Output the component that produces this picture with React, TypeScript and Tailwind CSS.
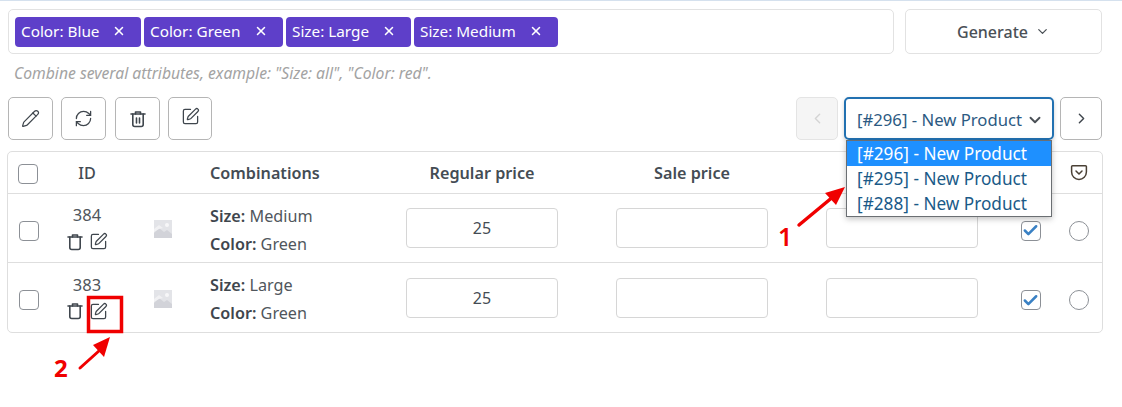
import { ChevronDown, ChevronLeft, ChevronRight, X, Pencil, RefreshCw, Check, SquarePen } from "lucide-react";

function Trash({ bars, size = 18 }: { bars?: boolean; size?: number }) {
  return (
    <svg width={size} height={size} viewBox="0 0 18 18" fill="none" stroke="#3f464d" strokeWidth="1.6" strokeLinecap="round" strokeLinejoin="round">
      <path d="M2 4h14" />
      <path d="M6.500 4V2h5v2" />
      <path d="M3.800 4v10.500A2 2 0 0 0 5.800 16.500h6.400a2 2 0 0 0 2-2V4" />
      {bars && <path d="M7.500 8v5M10.500 8v5" />}
    </svg>
  );
}

function ImgPh() {
  return (
    <svg width="18" height="18" viewBox="0 0 18 18">
      <rect width="18" height="18" fill="#e3e4e8" />
      <path d="M0 13l5-5 5 4 3-2 5 4v4H0z" fill="#d2d3d9" />
      <path d="M0 9l5-4 4 3-4 1-5 3z" fill="#f1f1f3" />
      <circle cx="13" cy="5" r="2" fill="#f7f7f8" />
    </svg>
  );
}

function Tag({ label, w }: { label: string; w: string }) {
  return (
    <div className={`flex h-[30px] items-center justify-between rounded-[4px] bg-[#5e3fc9] pl-[6px] text-[15.300px] text-white ${w}`}>
      <span>{label}</span>
      <span className="mr-[15px] -mt-[2px] flex w-[14px] justify-center"><X size={14} strokeWidth={2.6} /></span>
    </div>
  );
}

function ToolBtn({ children, w }: { children: React.ReactNode; w: string }) {
  return (
    <button className={`flex h-[43px] items-center justify-center rounded-[5px] border border-[#b5b5b5] bg-white text-[#3f464d] ${w}`}>
      {children}
    </button>
  );
}

const cols = "grid grid-cols-[42px_74px_86px_196px_210px_210px_152px_77px_47px] items-center";

function Box({ checked }: { checked?: boolean }) {
  return (
    <span className="flex h-[20px] w-[20px] items-center justify-center rounded-[4px] border border-[#8c9096] bg-white">
      {checked && <Check size={17} strokeWidth={3.6} className="text-[#3a81c4]" />}
    </span>
  );
}

function Row({ id, k, last }: { id: string; k: string; last?: boolean }) {
  return (
    <div className={`${cols} h-[69px] ${last ? "" : "border-b border-[#dedede]"}`}>
      <div className="mt-[5px] flex justify-start pl-[11px]"><Box /></div>
      <div className="flex flex-col items-center gap-[7px]">
        <span className="text-[16.500px] leading-[20px] text-[#50565c]">{id}</span>
        <div className="flex items-center gap-[5px]">
          <Trash />
          <SquarePen size={19} strokeWidth={1.6} className="text-[#3f464d]" />
        </div>
      </div>
      <div className="mt-[2px] flex justify-center pr-[9px]"><ImgPh /></div>
      <div className="mt-[3px] flex flex-col text-[16.200px] leading-[28px] text-[#50565c]">
        <span><b className="font-semibold text-[#3f464d]">Size:</b> {k}</span>
        <span><b className="font-semibold text-[#3f464d]">Color:</b> Green</span>
      </div>
      <div><div className="flex h-[40px] w-[152px] items-center justify-center rounded-[4px] border border-[#d6d6d6] text-[16px] text-[#444c54]">25</div></div>
      <div><div className="h-[40px] w-[152px] rounded-[4px] border border-[#d6d6d6]" /></div>
      <div><div className="h-[40px] w-[152px] rounded-[4px] border border-[#d6d6d6]" /></div>
      <div className="mt-[5px] flex justify-center pl-[28px]"><Box checked /></div>
      <div className="mt-[5px] flex justify-center"><span className="h-[20px] w-[20px] rounded-full border border-[#8c9096]" /></div>
    </div>
  );
}

export default function App() {
  return (
    <div className="relative h-[407px] w-[1122px] overflow-hidden bg-white font-['Noto_Sans',sans-serif]">
      <div className="h-px bg-[#d5e1ee]" />
      <div className="flex gap-[11px] pl-[8px] pr-[20px] pt-[8px]">
        <div className="flex h-[45px] w-[886px] items-center gap-[3px] rounded-[5px] border border-[#e2e2e2] pl-[6px]">
          <Tag label="Color: Blue" w="w-[126px]" />
          <Tag label="Color: Green" w="w-[139px]" />
          <Tag label="Size: Large" w="w-[125px]" />
          <Tag label="Size: Medium" w="w-[144px]" />
        </div>
        <div className="flex h-[45px] w-[197px] items-center justify-center gap-[7px] rounded-[5px] border border-[#e2e2e2] text-[16px] font-medium text-[#4a5056]">
          <span>Generate</span>
          <ChevronDown size={15} strokeWidth={2} />
        </div>
      </div>
      <p className="mt-[10px] pl-[14px] text-[15.700px] italic leading-[18px] text-[#a3a3a3]">
        Combine several attributes, example: "Size: all", "Color: red".
      </p>
      <div className="mt-[15px] flex justify-between pl-[8px] pr-[20px]">
        <div className="flex">
          <ToolBtn w="w-[45px]"><Pencil size={19} strokeWidth={1.5} /></ToolBtn>
          <div className="w-[8px]" />
          <ToolBtn w="w-[45px]"><RefreshCw size={19} strokeWidth={1.6} /></ToolBtn>
          <div className="w-[9px]" />
          <ToolBtn w="w-[45px]"><Trash bars /></ToolBtn>
          <div className="w-[8px]" />
          <ToolBtn w="w-[44px]"><SquarePen size={19} strokeWidth={1.6} className="-mt-[4px]" /></ToolBtn>
        </div>
        <div className="flex gap-[6px]">
          <button className="flex h-[43px] w-[42px] items-center justify-center rounded-[5px] border border-[#e4e4e4] bg-[#f5f5f5] text-[#d4d4d4]"><ChevronLeft size={17} strokeWidth={2} /></button>
          <div className="relative">
            <div className="flex h-[43px] w-[210px] items-center justify-between rounded-[5px] border-2 border-[#2271b1] pl-[11px] pr-[8px] pt-[2px] text-[16.700px] text-[#2c5a82] shadow-[0_2px_4px_rgba(0,0,0,0.18)]">
              <span>[#296] - New Product</span>
              <ChevronDown size={18} strokeWidth={2.5} className="text-[#4a5056]" />
            </div>
            <div className="absolute left-[2px] top-[43px] z-10 w-[206px] border border-[#6b6f73] bg-white text-[17.200px] leading-[25px] text-[#1a5a88] shadow-[0_2px_6px_rgba(0,0,0,0.25)]">
              <div className="bg-[#1e90ff] pl-[10px] text-white">[#296] - New Product</div>
              <div className="pl-[10px]">[#295] - New Product</div>
              <div className="pl-[10px]">[#288] - New Product</div>
            </div>
          </div>
          <button className="flex h-[43px] w-[42px] items-center justify-center rounded-[5px] border border-[#b5b5b5] text-[#3f464d]"><ChevronRight size={17} strokeWidth={2} /></button>
        </div>
      </div>
      <div className="ml-[7px] mt-[11px] w-[1096px] rounded-[5px] border border-[#dedede]">
        <div className={`${cols} h-[42px] border-b border-[#dedede] pt-[2px] text-[16.200px] font-semibold text-[#444c54]`}>
          <div className="flex justify-start pl-[10px]"><Box /></div>
          <div className="text-center font-medium">ID</div>
          <div />
          <div>Combinations</div>
          <div className="w-[152px] text-center">Regular price</div>
          <div className="w-[152px] text-center">Sale price</div>
          <div />
          <div />
          <div className="-mt-[2px] flex justify-center">
            <svg width="18" height="18" viewBox="0 0 18 18" fill="none" stroke="#4a4035" strokeWidth="1.500" strokeLinecap="round" strokeLinejoin="round">
              <path d="M2.500 1.800h13a.9.9 0 0 1 .9.9V8a7.400 7.400 0 0 1-14.800 0V2.700a.9.9 0 0 1 .9-.9z" />
              <path d="M6 7l3 3 3-3" />
            </svg>
          </div>
        </div>
        <Row id="384" k="Medium" />
        <Row id="383" k="Large" last />
      </div>

      {/* annotations */}
      <svg className="pointer-events-none absolute left-0 top-0 z-20" width="1122" height="407" fill="none">
        <path d="M799 225 L834 196" stroke="#f00000" strokeWidth="3.500" strokeLinecap="round" />
        <path d="M845 187 L825 193 L836 205 Z" fill="#f00000" />
        <path d="M80 368 L100 350" stroke="#f00000" strokeWidth="3" strokeLinecap="round" />
        <path d="M110 337 L93 345 L104 357 Z" fill="#f00000" />
        <rect x="88.500" y="297.500" width="33" height="34" stroke="#f00000" strokeWidth="3.500" />
      </svg>
      <span className="absolute left-[778px] top-[220px] z-20 text-[25px] font-semibold leading-[32px] text-[#f00000]">1</span>
      <span className="absolute left-[54px] top-[352px] z-20 text-[24px] font-bold leading-[32px] text-[#f00000]">2</span>
    </div>
  );
}
